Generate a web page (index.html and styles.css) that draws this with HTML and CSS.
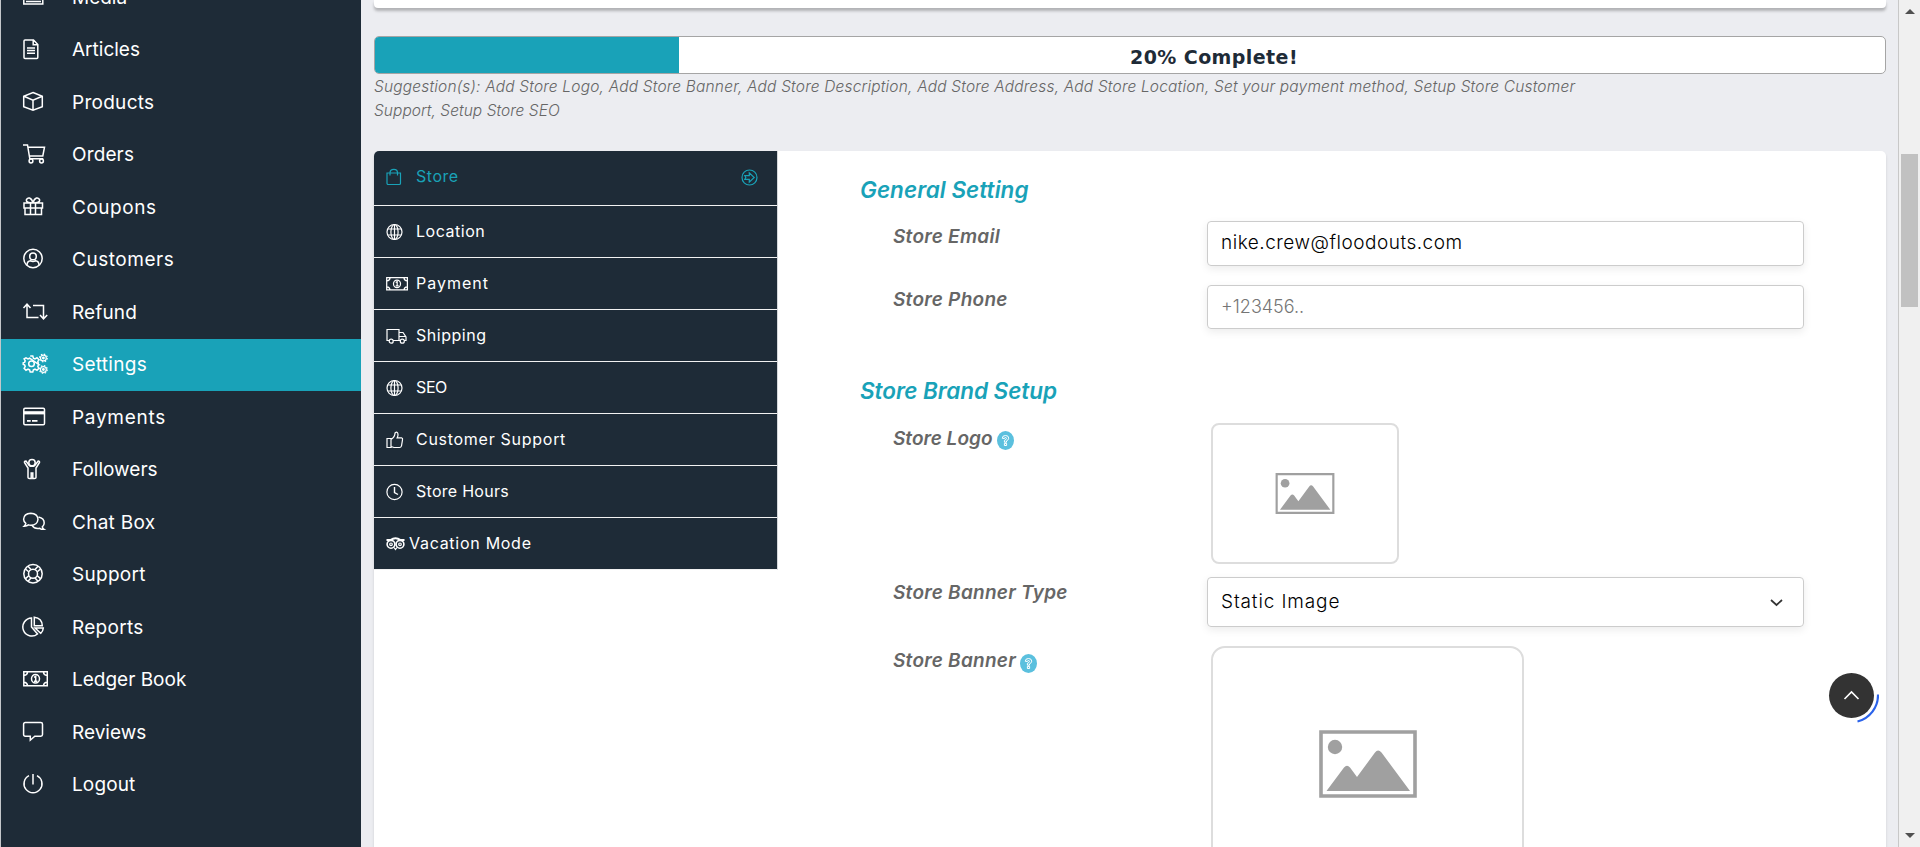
FILE: index.html
```html
<!DOCTYPE html>
<html lang="en">
<head>
<meta charset="utf-8">
<title>Store Settings</title>
<link rel="stylesheet" href="styles.css">
</head>
<body>
<svg class="defs" aria-hidden="true">
  <symbol id="globe" viewBox="0 0 22 18"><circle cx="8.500" cy="9" r="7.500"/><ellipse cx="8.500" cy="9" rx="3.600" ry="7.500"/><path d="M8.500 1.500v15M2 6h13M2 12h13"/></symbol>
  <symbol id="cash" viewBox="0 0 26 24"><path d="M1.800 3.800h23.500v14H1.800zM2 7.500q3.300-.2 3.600-3.500M25 7.500q-3.300-.2-3.600-3.500M2 14.200q3.300.2 3.600 3.500M25 14.200q-3.300.2-3.600 3.500"/><ellipse cx="13.500" cy="10.800" rx="4" ry="4.300"/><path d="M12 9.300l1.700-1v4.800M12 13.200h3.400"/></symbol>
  <symbol id="photo" viewBox="0 0 98 68"><path d="M2 2h94v64H2z" fill="none" stroke="#a0a0a0" stroke-width="3.600"/><circle cx="16" cy="17" r="7.200"/><path d="M7.500 61 25 37.500q3-3.500 6 0L38 47 56 22.500q3-4 6.500 0L91 61z"/></symbol>
  <symbol id="help" viewBox="0 0 17 19"><path d="M5.300 7.300q0-2.800 3.200-2.800t3.200 2.700q0 1.800-2.200 2.700v1.300H7.400V9.300q2-.7 2-1.800t-1-1-1 1zM7.400 12.400h2.200v2.100H7.400z"/></symbol>
</svg>
<aside class="sidebar">
  <nav class="menu">
    <a class="item"><svg class="ico" viewBox="0 0 26 24"><path d="M1.800 3h19v15h-19zM4 15.500h15"/></svg><span>Media</span></a>
    <a class="item"><svg class="ico" viewBox="0 0 26 24"><path d="M3 2h8.500l4.300 4.500v13q0 1-1 1H3q-1 0-1-1V3q0-1 1-1zM11.200 2.200v4.500h4.500M5 10h8M5 12.600h8M5 15.200h8"/></svg><span>Articles</span></a>
    <a class="item"><svg class="ico" viewBox="0 0 26 24"><path d="M11 1.500l9.300 3.700v10.600L11 19.300 1.700 15.800V5.200zM1.900 5.300 11 9.200l9.200-3.900M11 9.200v10"/></svg><span class="track-md">Products</span></a>
    <a class="item"><svg class="ico" viewBox="0 0 26 24"><path d="M1 2h4.500l2.300 13.800h13.500M6 4.200h16.500l-1.700 8.800H7.400"/><circle cx="9" cy="18" r="1.900"/><circle cx="19.500" cy="18" r="1.900"/></svg><span class="track-sm">Orders</span></a>
    <a class="item"><svg class="ico" viewBox="0 0 26 24"><path d="M2 7h18.500v5H2zM3 12v6.500h16.500V12M8.500 7v11.500M13.500 7v11.500M11 7Q4 7 4.300 4 5 1.500 7.500 2 10 2.800 11 7q1-4.200 3.500-5 2.500-.5 3.200 2Q18 7 11 7"/></svg><span class="track-lg">Coupons</span></a>
    <a class="item"><svg class="ico" viewBox="0 0 26 24"><circle cx="11" cy="10.500" r="9.200"/><circle cx="11" cy="8.400" r="3.300"/><path d="M5 17q.3-4 3.500-4.200 2.500 1.200 5 0Q16.700 13 17 17"/></svg><span class="track-lg">Customers</span></a>
    <a class="item"><svg class="ico" viewBox="0 0 26 24"><path d="M1.500 7 5 3.200 8.500 7M5 3.500v13h11.500M11 4.500h10.500v13M18 14l3.500 3.800L25.200 14"/></svg><span class="track-sm">Refund</span></a>
    <a class="item active"><svg class="ico" viewBox="0 0 26 24"><circle cx="9.500" cy="10.800" r="2.800"/><path d="M8.200 3h2.600l.6 2.200 1.600.7 2-1.100 1.900 1.900-1.100 2 .6 1.500.6.200M17 11.700l-.6.200-.6 1.500 1.100 2-1.900 1.900-2-1.100-1.600.7-.6 2.100H8.200l-.6-2.100-1.600-.7-2 1.100-1.900-1.900 1.100-2-.6-1.500-1.400-.5V9.900l1.400-.5.6-1.500-1.100-2L4 4.800l2 1.100 1.600-.7z"/><circle cx="21.400" cy="5" r="2.900" stroke-width="1.200"/><circle cx="21.400" cy="5" r=".7"/><circle cx="21.400" cy="16.500" r="2.900" stroke-width="1.200"/><circle cx="21.400" cy="16.500" r=".7"/><circle cx="21.400" cy="5" r="3.900" stroke-width="1.100" stroke-dasharray="1.500 1.560"/><circle cx="21.400" cy="16.500" r="3.900" stroke-width="1.100" stroke-dasharray="1.500 1.560"/></svg><span class="track-md">Settings</span></a>
    <a class="item"><svg class="ico" viewBox="0 0 26 24"><rect x="1.800" y="2.300" width="20.700" height="16.500" rx="1.200"/><path d="M2 6.800h20.400" stroke-width="3.200"/><path d="M5 14.800h3.700M10 14.800h5.500" stroke-width="1.700"/></svg><span class="track-xl">Payments</span></a>
    <a class="item"><svg class="ico" viewBox="0 0 26 24"><circle cx="10" cy="4.800" r="3.200"/><path d="M2.500 4.500 6 10v9.500q0 1 1.500 1h1.700V15h1.600v5.500h1.700q1.500 0 1.500-1V10l3.500-5.500q.3-1.500-1.300-1.500L12.800 7.500Q10 9 7.200 7.500L4 3Q2.200 3 2.500 4.500z"/></svg><span>Followers</span></a>
    <a class="item"><svg class="ico" viewBox="0 0 26 24"><path d="M3.800 12.300Q1.600 10.600 1.600 8.300 2 2.400 8.800 2.200q6.700.2 7.200 6-.5 5.800-7.200 6-1.400 0-2.300-.3-1.700 1.400-4.400 1.300 1.500-1.300 1.700-2.900zM16.500 6q5.700 1.200 5.700 6 0 2.300-1.900 3.800.2 1.600 1.700 2.500-2.700.2-4.200-1-5.200 1.100-7.800-3"/></svg><span class="track-md">Chat Box</span></a>
    <a class="item"><svg class="ico" viewBox="0 0 26 24"><circle cx="11" cy="10.800" r="9.200"/><circle cx="11" cy="10.800" r="4.500"/><path d="M6 3.300l3 3.200M3.500 6l3.200 2.800M16 3.300l-3 3.200M18.500 6l-3.200 2.800M6 18.300l3-3.200M3.500 15.600l3.200-2.800M16 18.300l-3-3.200M18.500 15.600l-3.200-2.800"/></svg><span class="track-md">Support</span></a>
    <a class="item"><svg class="ico" viewBox="0 0 26 24"><path d="M9.500 2a9 9 0 1 0 6 16L9.500 11zM12.300 1.200v8.500h8Q20 2 12.300 1.200zM13 12h8.300q-.3 3.500-2.600 5.300z"/></svg><span class="track-md">Reports</span></a>
    <a class="item"><svg class="ico" viewBox="0 0 26 24"><use href="#cash"/></svg><span>Ledger Book</span></a>
    <a class="item"><svg class="ico" viewBox="0 0 26 24"><path d="M3.300 1.500h15.500q1.700 0 1.700 1.700v10.300q0 1.700-1.700 1.700h-6l-4.500 4v-4h-5q-1.700 0-1.700-1.700V3.200q0-1.700 1.700-1.700z"/></svg><span>Reviews</span></a>
    <a class="item"><svg class="ico" viewBox="0 0 26 24"><path d="M11 1v10.500M7 2.700a9 9 0 1 0 8 0"/></svg><span class="track-sm">Logout</span></a>
  </nav>
</aside>
<main class="main">
  <div class="prev-card"></div>
  <div class="progress"><div class="fill" style="width:20.15%"></div><span class="progress-text">20% Complete!</span></div>
  <p class="suggest">Suggestion(s): Add Store Logo, Add Store Banner, Add Store Description, Add Store Address, Add Store Location, Set your payment method, Setup Store Customer<br><span class="wrapped">Support, Setup Store SEO</span></p>
  <section class="panel">
    <nav class="tabs">
      <a class="tab current"><svg class="tico" viewBox="0 0 22 18"><path d="M1 5h13.500v10.200q0 1.300-1.300 1.300h-11Q1 16.500 1 15.200zM4 7.500V5q0-3.700 3.800-3.700T11.500 5v2.500"/></svg><span class="track-lg">Store</span><svg class="arrow" viewBox="0 0 17 17"><circle cx="8.500" cy="8.500" r="7.500"/><path d="M3.800 6.700h4.500V3.800L13.200 8.500l-4.900 4.700v-2.900H3.800l1-1.800z"/></svg></a>
      <a class="tab"><svg class="tico" viewBox="0 0 22 18"><use href="#globe"/></svg><span class="track-lg">Location</span></a>
      <a class="tab"><svg class="tico wide" viewBox="1 2 25 18"><use href="#cash" width="26" height="24"/></svg><span class="track-xxl">Payment</span></a>
      <a class="tab"><svg class="tico" viewBox="0 0 22 18"><path d="M3.500 13.500H1v-11h12v11H7M13 5.500h4l3 4.500v3.500h-2M13 9.500h7M13 13.500h1.500"/><circle cx="5.200" cy="14.200" r="2"/><circle cx="16.300" cy="14.200" r="2"/></svg><span class="track-lg">Shipping</span></a>
      <a class="tab"><svg class="tico" viewBox="0 0 22 18"><use href="#globe"/></svg><span class="track-neg">SEO</span></a>
      <a class="tab"><svg class="tico" viewBox="0 0 22 18"><path d="M1 7.500h4v9H1zM5 8.500q4-2.500 4-6.500 2.500-2 3 1 .2 2-.8 3.800h4.300q1.500.5 1 2l-1 6q-.5 1.700-2 1.700H8L5 15.500"/></svg><span class="track-xl">Customer Support</span></a>
      <a class="tab"><svg class="tico" viewBox="0 0 22 18"><circle cx="8.500" cy="9" r="7.600"/><path d="M8.500 4v5.500l3.500 2" stroke-width="1.400"/></svg><span class="track-md">Store Hours</span></a>
      <a class="tab tight"><svg class="tico" viewBox="0 0 22 18"><path d="M.5 5h4Q9.500 1.500 14.500 5h4" stroke-width="2"/><circle cx="5" cy="9.300" r="3.900" stroke-width="1.600"/><circle cx="14" cy="9.300" r="3.900" stroke-width="1.600"/><circle cx="5" cy="9.300" r="1.300"/><circle cx="14" cy="9.300" r="1.300"/><path d="M8 12.500l1.500 2 1.500-2"/></svg><span class="track-xl">Vacation Mode</span></a>
    </nav>
    <form class="form">
      <h2 class="heading">General Setting</h2>
      <div class="row email"><label class="label">Store Email</label><div class="field">nike.crew@floodouts.com</div></div>
      <div class="row phone"><label class="label">Store Phone</label><div class="field hint">+123456..</div></div>
      <h2 class="heading second">Store Brand Setup</h2>
      <div class="row logo"><label class="label">Store Logo<svg class="help"><use href="#help"/></svg></label><div class="upload small"><svg class="photo"><use href="#photo"/></svg></div></div>
      <div class="row type"><label class="label">Store Banner Type</label><div class="field select">Static Image<svg class="chev" viewBox="0 0 13 8"><path d="M1 1l5.500 5L12 1"/></svg></div></div>
      <div class="row banner"><label class="label">Store Banner<svg class="help"><use href="#help"/></svg></label><div class="upload large"><svg class="photo"><use href="#photo"/></svg></div></div>
    </form>
  </section>
</main>
<div class="scrollbar"><i class="up"></i><div class="thumb"></div><i class="down"></i></div>
<svg class="to-top" viewBox="0 0 56 56"><circle cx="28.500" cy="28.500" r="22.500" fill="#333" stroke="none"/><path d="M21.500 32l7-7 7 7" stroke="#fff" stroke-width="1.600"/><path d="M55 27.500A27.200 27.200 0 0 1 34.500 54.500" stroke="#2b63ea" stroke-width="2.200"/></svg>
</body>
</html>
```
FILE: styles.css
```css
* { box-sizing: border-box; }
body {
  margin: 0;
  display: flex;
  width: 1920px;
  height: 847px;
  overflow: hidden;
  background: #ecedf1;
  font-family: Inter, "Open Sans", sans-serif;
}
svg { fill: none; stroke: currentColor; stroke-width: 1.2; flex: none; }
.defs { position: absolute; width: 0; height: 0; }

/* letter tracking steps */
.track-neg { letter-spacing: -.38px; }
.track-sm { letter-spacing: .13px; }
.track-md { letter-spacing: .28px; }
.track-lg { letter-spacing: .53px; }
.track-xl { letter-spacing: .72px; }
.track-xxl { letter-spacing: .98px; }

.sidebar {
  width: 361px;
  height: 847px;
  overflow: hidden;
  border-left: 1px solid #c4c7ca;
  background: #1e2b37;
  color: #fff;
}
.menu { margin-top: -28.75px; }
.item {
  display: flex;
  align-items: center;
  height: 52.5px;
  padding-left: 21px;
  font-size: 19px;
}
.item span { padding-bottom: 1px; }
.tab span { padding-bottom: 2px; }
.item.active { background: #19a2b8; }
.ico { width: 26px; height: 24px; margin-right: 24px; stroke-width: 1.5; }

.main { width: 1537px; padding: 0 12px 0 13px; overflow: hidden; }
.prev-card {
  height: 8px;
  border-radius: 0 0 4px 4px;
  background: #fff;
  box-shadow: 0 3px 3px rgba(0, 0, 0, .25);
}
.progress {
  position: relative;
  height: 38px;
  margin-top: 28px;
  border: 1px solid #a5a5a5;
  border-radius: 5px;
  overflow: hidden;
  background: #fff;
}
.fill { height: 100%; background: #19a2b8; }
.progress-text {
  position: absolute;
  left: 755px;
  top: 6px;
  font: bold 19px/28px "DejaVu Sans", sans-serif;
  letter-spacing: .42px;
  color: #1e2b37;
}
.suggest {
  height: 48px;
  margin: 1px 0 28px;
  font-size: 15.5px;
  font-weight: 350;
  font-style: italic;
  line-height: 24px;
  letter-spacing: .18px;
  white-space: nowrap;
  color: #666;
}
.suggest .wrapped { letter-spacing: .04px; }
.panel {
  display: flex;
  align-items: flex-start;
  height: 720px;
  border-radius: 5px;
  background: #fff;
  box-shadow: 0 2px 3px rgba(0, 0, 0, .12);
  overflow: hidden;
}
.tabs { width: 404px; border-right: 1px solid #d5d8db; background: #1e2b37; color: #fff; }
.tab {
  display: flex;
  align-items: center;
  height: 52px;
  padding: 0 19px 0 12px;
  border-bottom: 1px solid #f2f2f2;
  font-size: 16px;
}
.tab.current { height: 55px; padding-bottom: 2px; color: #19a2b8; }
.tico { width: 22px; height: 18px; margin-right: 8px; }
.tico.wide { stroke-width: 1.4; }
.tab.tight .tico { margin-right: 1px; }
.arrow { width: 17px; height: 17px; margin: 1px 0 0 auto; }

.form { width: 1026px; padding-left: 83px; }
.heading {
  height: 30px;
  margin: 24px 0 16px -1px;
  font-size: 22.5px;
  font-weight: 600;
  font-style: italic;
  line-height: 30px;
  letter-spacing: .05px;
  color: #19a2b8;
}
.heading.second { margin: 47px 0 17px -1px; letter-spacing: -.05px; }
.row { display: grid; grid-template-columns: 314px 597px; padding-left: 32px; }
.email { height: 45px; margin-bottom: 19px; }
.phone { height: 44px; }
.logo { height: 141px; margin-bottom: 13px; }
.type { height: 50px; margin-bottom: 19px; }
.banner { height: 240px; }
.label {
  display: flex;
  align-items: center;
  height: 31px;
  font-size: 19px;
  font-weight: 600;
  font-style: italic;
  letter-spacing: .27px;
  color: #666;
}
.phone .label, .banner .label { height: 29px; }
.logo .label { letter-spacing: .02px; }
.help {
  width: 17px;
  height: 19px;
  margin: 4px 0 0 5px;
  border-radius: 50%;
  background: #5bc0de;
  color: #fff;
  stroke-width: 1;
}
.banner .help { margin: 6px 0 0 4px; }
.field {
  display: flex;
  align-items: center;
  justify-content: space-between;
  padding: 0 20px 2px 13px;
  border: 1px solid #ccc;
  border-radius: 4px;
  box-shadow: 0 3px 8px rgba(0, 0, 0, .08);
  font-size: 19px;
  font-weight: 300;
  letter-spacing: .51px;
  color: #000;
}
.field.hint { font-size: 18px; color: #757575; letter-spacing: 0; }
.field.select { letter-spacing: .88px; }
.chev { width: 13px; height: 8px; margin-top: 4px; stroke: #333; stroke-width: 1.7; }
.upload {
  display: flex;
  align-items: center;
  justify-content: center;
  margin-left: 4px;
  border: 2px solid #ddd;
}
.upload.small { width: 188px; height: 141px; border-radius: 8px; }
.upload.large { width: 313px; height: 235px; border-radius: 14px; }
.photo { fill: #a0a0a0; stroke: none; }
.small .photo { width: 60px; height: 41px; }
.large .photo { width: 98px; height: 68px; }

.scrollbar {
  display: flex;
  flex-direction: column;
  align-items: center;
  width: 22px;
  height: 847px;
  border-left: 1px solid #c8c8c8;
  background: #f0f0f0;
}
.thumb { width: 17px; height: 153px; margin-top: 140px; background: #c1c1c1; }
.up, .down { border: 5px solid transparent; }
.up { margin-top: 4px; border-bottom-color: #505050; }
.down { margin-top: auto; margin-bottom: 4px; border-top-color: #505050; }
.to-top { position: absolute; left: 1823px; top: 667px; width: 56px; height: 56px; }
```
